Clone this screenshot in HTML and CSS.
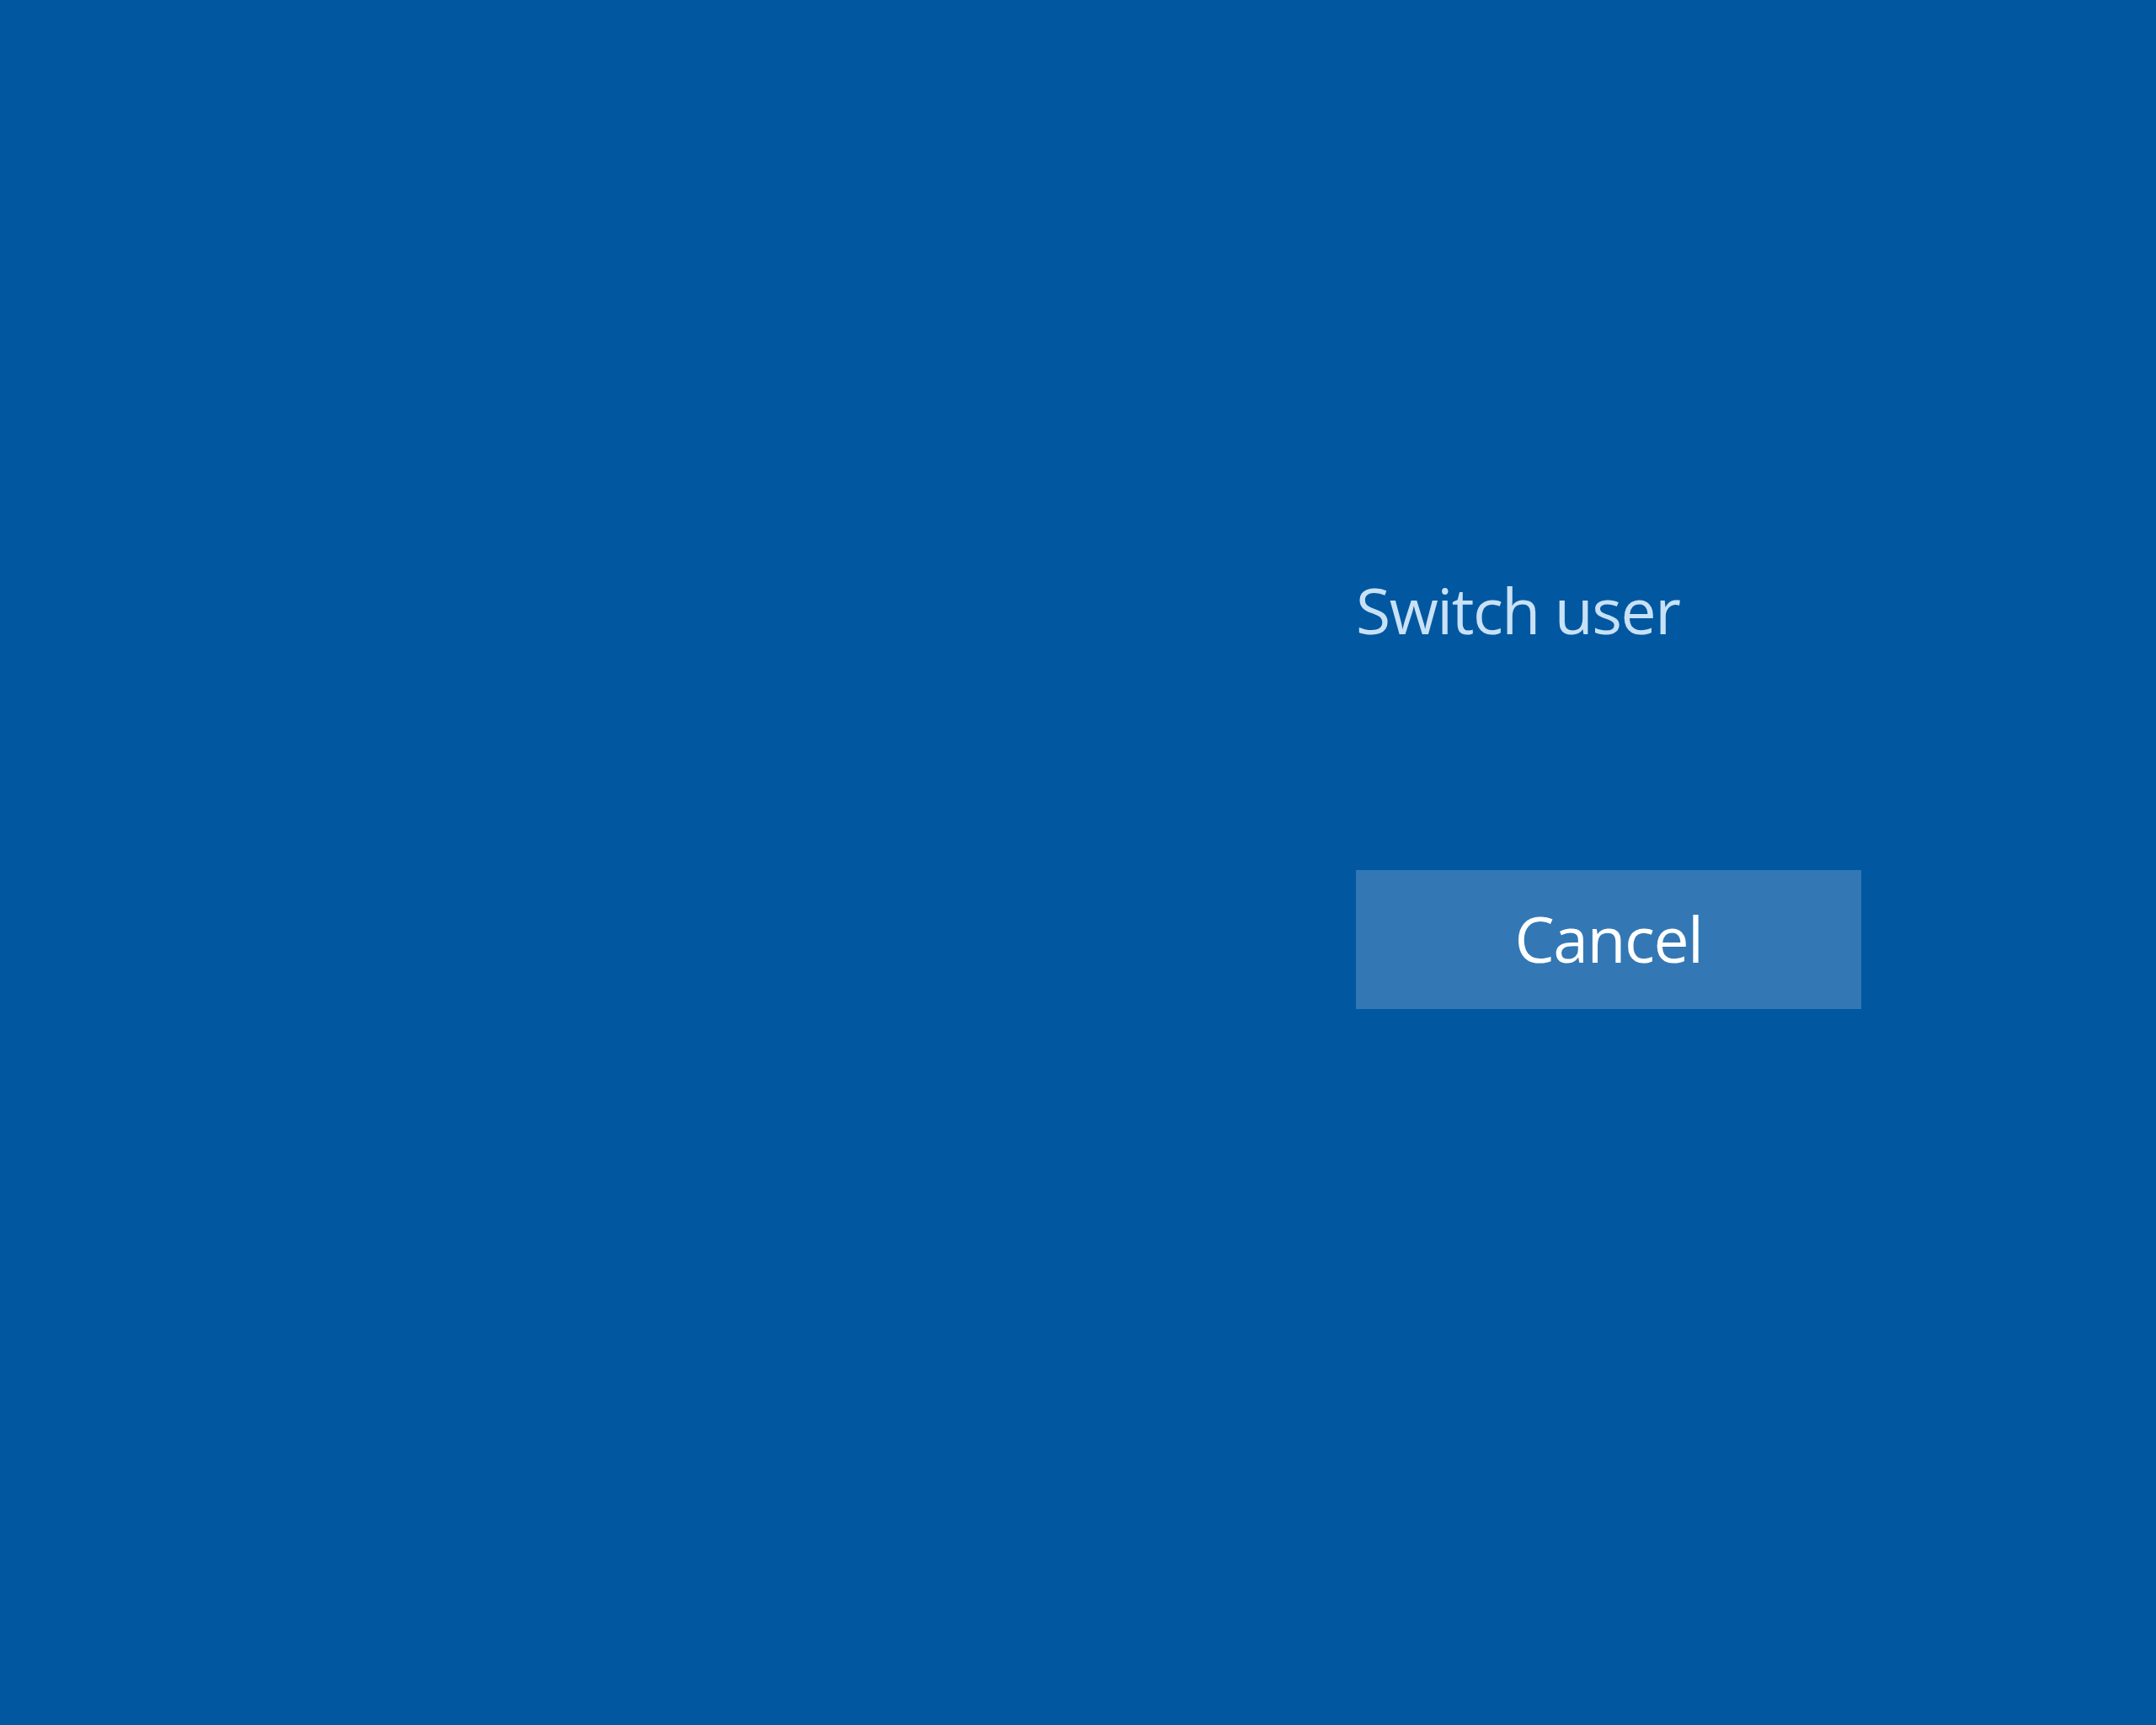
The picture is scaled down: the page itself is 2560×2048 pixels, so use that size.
FILE: index.html
```html
<!DOCTYPE html>
<html lang="en">
  <head>
    <meta charset="utf-8">
    <title>Switch user</title>
    <link rel="stylesheet" href="styles.css">
  </head>
  <body>
    <div class="screen">
      <div class="panel">
        <div class="title">Switch user</div>
        <button class="cancel" type="button">Cancel</button>
      </div>
    </div>
  </body>
</html>
```

FILE: styles.css
```css
html, body { margin: 0; height: 100%; }
body { background: #0158a0; font-family: "Open Sans", "Noto Sans", sans-serif; }
.screen { min-height: 100%; display: flex; }
.panel { display: flex; flex-direction: column; align-items: flex-start; padding: 687px 0 0 1610px; }
.title { font-size: 75px; line-height: 1; color: #c8e1f6; letter-spacing: -1.5px; }
.cancel {
  margin-top: 271px;
  width: 600px;
  height: 165px;
  border: 0;
  padding: 0 0 4px;
  background: #3378b5;
  color: #fff;
  font-family: inherit;
  font-size: 75px;
  letter-spacing: -1.5px;
  display: flex;
  align-items: center;
  justify-content: center;
}
```
